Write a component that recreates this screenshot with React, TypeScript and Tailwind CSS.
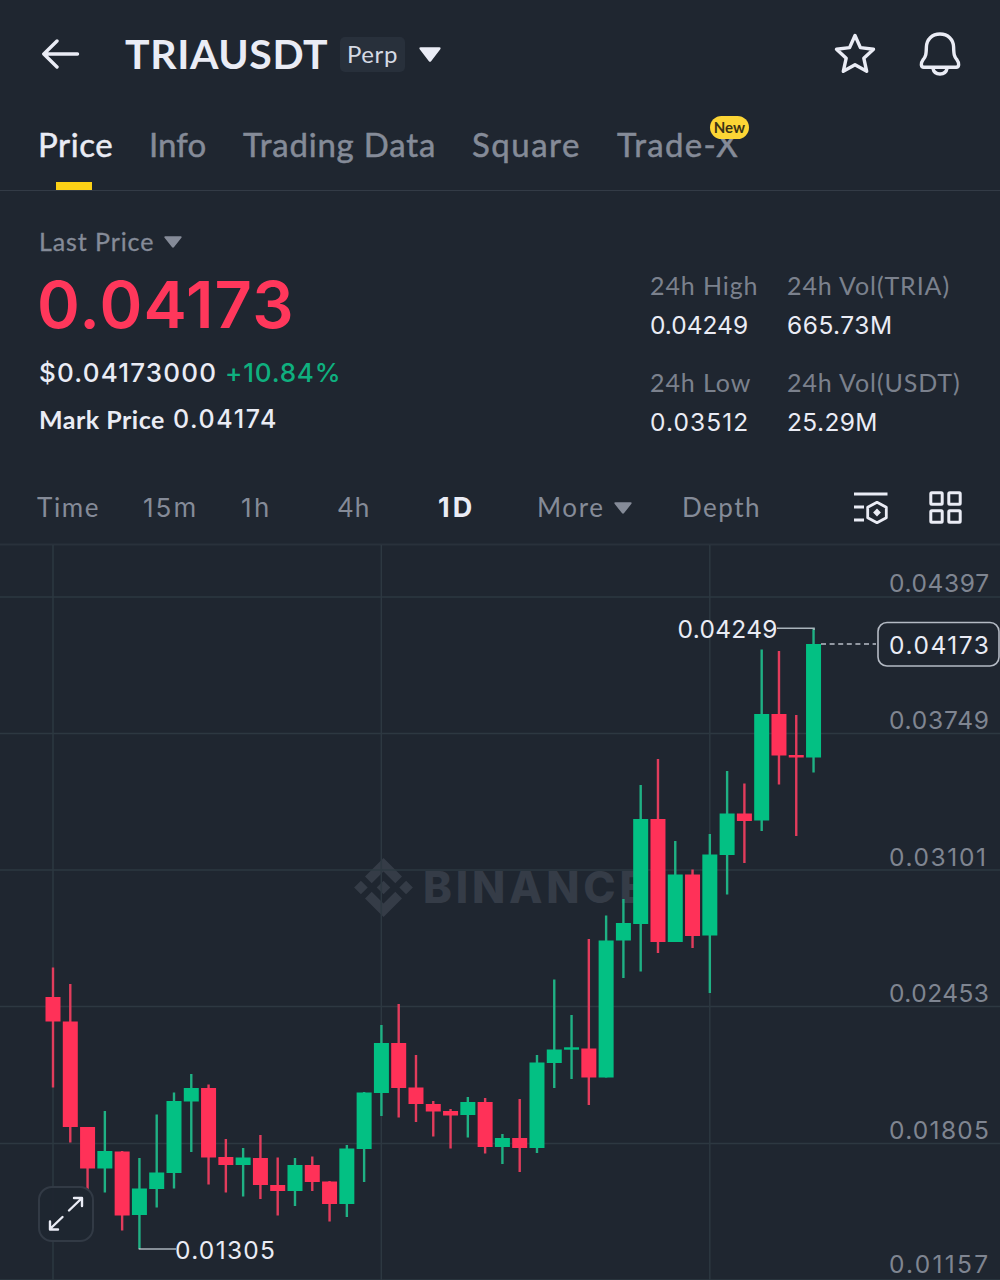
import { useState } from 'react';

type Candle = {
  up: boolean;
  high: number;
  top: number;
  bottom: number;
  low: number;
};

const TABS = [
  { id: 'price', title: 'Price', box: 'w-[111px]', text: 'tracking-[0.6px]' },
  { id: 'info', title: 'Info', box: 'w-[94px]', text: 'tracking-[0.1px]' },
  { id: 'data', title: 'Trading Data', box: 'w-[229px]', text: 'tracking-[0.8px]' },
  { id: 'square', title: 'Square', box: 'w-[145px]', text: 'tracking-[1.5px]' },
  { id: 'tradex', title: 'Trade-X', box: 'w-[122px]', text: 'tracking-[1.3px]' },
];

const STATS = [
  { label: '24h High', value: '0.04249', text: 'tracking-[0px]' },
  { label: '24h Vol(TRIA)', value: '665.73M', text: 'tracking-[0.5px]' },
  { label: '24h Low', value: '0.03512', text: 'tracking-[1.1px]' },
  { label: '24h Vol(USDT)', value: '25.29M', text: 'tracking-[0.4px]' },
];

const GRID_Y = [597, 733.5, 870, 1006.5, 1143.5, 1280];
const GRID_X = [53, 381.3, 709.8];

const AXIS = [
  { y: 592, text: '0.04397', width: 100 },
  { y: 728.5, text: '0.03749', width: 100 },
  { y: 865.5, text: '0.03101', width: 97 },
  { y: 1002, text: '0.02453', width: 100 },
  { y: 1138.5, text: '0.01805', width: 100 },
  { y: 1273, text: '0.01157', width: 99 },
];

// [up, high, body top, body bottom, low]
const RAW: [number, number, number, number, number][] = [
  [0, 967.5, 997, 1021.5, 1087.5],
  [0, 984, 1021.5, 1127, 1142.5],
  [0, 1127, 1127, 1168.5, 1191],
  [1, 1111, 1151, 1168.5, 1192.5],
  [0, 1151, 1151.5, 1215.5, 1230.5],
  [1, 1158, 1188.5, 1215, 1249],
  [1, 1114.5, 1172.5, 1189, 1207.5],
  [1, 1092.5, 1101, 1173, 1188.5],
  [1, 1074, 1088, 1101.5, 1152],
  [0, 1084.5, 1088, 1157.5, 1184.5],
  [0, 1139, 1157, 1165, 1192.5],
  [1, 1148, 1157.5, 1165, 1196.5],
  [0, 1135, 1158, 1185, 1199],
  [0, 1157.5, 1185, 1191, 1215.5],
  [1, 1158, 1165, 1191, 1206],
  [0, 1156.5, 1165, 1182, 1191],
  [0, 1181, 1181.5, 1204, 1221.5],
  [1, 1145, 1148.5, 1204, 1217],
  [1, 1092, 1092.5, 1149, 1182],
  [1, 1025, 1043, 1093, 1116],
  [0, 1004, 1043, 1088, 1117.5],
  [0, 1055, 1087.5, 1104, 1122],
  [0, 1101, 1104, 1111.5, 1136.5],
  [0, 1109, 1111, 1115.5, 1148.5],
  [1, 1097, 1102, 1115, 1137.5],
  [0, 1098, 1102, 1147, 1153.5],
  [1, 1134, 1138, 1147, 1164],
  [0, 1099, 1138, 1148, 1172],
  [1, 1055, 1062.5, 1148, 1153],
  [1, 979.5, 1049.5, 1063, 1088],
  [1, 1015, 1047.3, 1049.7, 1079],
  [0, 939, 1048.5, 1077.5, 1105],
  [1, 915.5, 940.5, 1077.5, 1077.5],
  [1, 899, 923, 940.5, 978],
  [1, 785, 819, 924, 971.5],
  [0, 759, 819, 942, 953],
  [1, 841, 874.5, 942, 942],
  [0, 869.5, 874.5, 936, 948],
  [1, 834, 854.5, 935.5, 993],
  [1, 771, 813.5, 855, 894.5],
  [0, 783.5, 813.5, 821, 863],
  [1, 649.5, 714, 820.5, 831],
  [0, 651, 714, 755.5, 784.5],
  [0, 715, 755, 757.5, 836],
  [1, 628, 644, 757.5, 772.5],
];

const candles: Candle[] = RAW.map(([up, high, top, bottom, low]) => ({
  up: up === 1,
  high,
  top,
  bottom,
  low,
}));

function Caret({ className }: { className: string }) {
  return (
    <svg className={className} viewBox="0 0 22 15" preserveAspectRatio="none" fill="currentColor">
      <path d="M1.6 0.3h18.8c1.2 0 1.6 1 0.9 1.9l-9.2 12c-0.6 0.8-1.6 0.8-2.2 0l-9.2-12c-0.7-0.9-0.3-1.9 0.9-1.9z" />
    </svg>
  );
}

function Header() {
  return (
    <header className="flex h-[108px] items-center pl-[41px] pr-[39px]">
      <svg className="h-[30px] w-[39px]" viewBox="0 0 39 30" fill="none" stroke="currentColor" strokeWidth="3.4" strokeLinecap="round" strokeLinejoin="round">
        <path d="M36.5 15H3M16 2L2.8 15L16 28" />
      </svg>
      <h1 className="ml-[45px] w-[215px] whitespace-nowrap text-[41px] font-bold leading-[48px] tracking-[0.6px]">TRIAUSDT</h1>
      <span className="flex h-[35px] w-[65px] items-center justify-center rounded-[5px] bg-[#28303b] text-[24px] tracking-[0.6px] text-[#d5dae4]">
        Perp
      </span>
      <Caret className="ml-[14px] h-[15px] w-[22px]" />
      <svg className="ml-auto h-[42px] w-[42px]" viewBox="0 0 42 42" fill="none" stroke="currentColor" strokeWidth="3.4" strokeLinejoin="round">
        <path d="M21 2.5L26.4 14.6L39.5 16.2L29.8 25.2L32.7 38.3L21 31.8L9.3 38.3L12.2 25.2L2.5 16.2L15.6 14.6Z" />
      </svg>
      <svg className="ml-[43px] h-[44px] w-[42px]" viewBox="0 0 42 44" fill="none" stroke="currentColor" strokeWidth="3.4" strokeLinejoin="round">
        <path d="M21 2C13 2 7.6 7.6 7.4 15C7.2 22 7 24.5 3.8 28.2C1.6 31 1.8 35.3 4.8 35.3H37.2C40.2 35.3 40.4 31 38.2 28.2C35 24.5 34.8 22 34.6 15C34.4 7.6 29 2 21 2Z" />
        <path d="M13.8 35.8C14.6 39.8 17.4 42 21 42C24.6 42 27.4 39.8 28.2 35.8" />
      </svg>
    </header>
  );
}

function Tabs() {
  const [active, setActive] = useState('price');

  return (
    <nav className="flex h-[83px] border-b border-[#333b46] pl-[38px]">
      {TABS.map((tab) => (
        <div key={tab.id} className={tab.box}>
          <button
            onClick={() => setActive(tab.id)}
            className={`relative flex flex-col items-center whitespace-nowrap [-webkit-text-stroke:0.5px_currentColor] ${active === tab.id ? 'text-[#eaecf5]' : 'text-[#858b98]'}`}
          >
            <span className={`h-[74px] text-[33px] leading-[72px] ${tab.text}`}>{tab.title}</span>
            {active === tab.id && <span className="mr-[3px] h-[8px] w-[36px] bg-[#fcd116]" />}
            {tab.id === 'tradex' && (
              <span className="absolute right-[-10px] top-[8px] h-[23px] w-[39px] rounded-full bg-[#fcd535] text-center text-[15px] font-bold leading-[23px] text-[#3a3216] [-webkit-text-stroke:0px]">
                New
              </span>
            )}
          </button>
        </div>
      ))}
    </nav>
  );
}

function Summary() {
  return (
    <section className="flex h-[279px] justify-between pl-[39px]">
      <div className="pt-[34px]">
        <div className="flex h-[34px] items-center text-[25px] tracking-[0.9px] text-[#858b98] [-webkit-text-stroke:0.3px_currentColor]">
          Last Price
          <Caret className="ml-[10px] h-[12px] w-[18px]" />
        </div>
        <div className="-ml-[2px] h-[92px] font-[Inter,sans-serif] text-[65px] font-semibold leading-[92px] tracking-[1.2px] text-[#ff375b]">
          0.04173
        </div>
        <div className="flex h-[44px] items-center font-[Inter,sans-serif] text-[26px] font-medium leading-[42px]">
          <span className="w-[186px] tracking-[1.2px]">$0.04173000</span>
          <span className="tracking-[0.8px] text-[#0fb07f]">+10.84%</span>
        </div>
        <div className="flex h-[50px] items-center text-[25px] font-bold">
          <span className="w-[134px] tracking-[0.5px]">Mark Price</span>
          <span className="font-[Inter,sans-serif] font-medium tracking-[1.6px]">0.04174</span>
        </div>
      </div>
      <div className="grid w-[350px] grid-cols-[137px_1fr] content-start gap-y-[19px] pt-[76px]">
        {STATS.map((stat) => (
          <div key={stat.label} className="whitespace-nowrap">
            <div className="h-[39px] text-[25px] leading-[37px] tracking-[0.9px] text-[#7b818d]">{stat.label}</div>
            <div className={`h-[39px] font-[Inter,sans-serif] text-[24.5px] leading-[38px] ${stat.text}`}>{stat.value}</div>
          </div>
        ))}
      </div>
    </section>
  );
}

function Intervals() {
  return (
    <div className="flex h-[73px] items-center pl-[37px] pt-[2px] text-[26px] leading-[71px] text-[#858b98]">
      <span className="w-[106px] tracking-[1.6px]">Time</span>
      <span className="w-[98px] font-[Inter,sans-serif] tracking-[2px]">15m</span>
      <span className="w-[97px] font-[Inter,sans-serif] tracking-[2.5px]">1h</span>
      <span className="w-[100px] tracking-[1.6px]">4h</span>
      <span className="w-[99px] font-[Inter,sans-serif] text-[27px] font-bold tracking-[3px] text-[#eaecf5]">1D</span>
      <span className="flex w-[145px] items-center tracking-[1.6px]">
        More
        <Caret className="ml-[9px] h-[12px] w-[18px]" />
      </span>
      <span className="tracking-[1.5px]">Depth</span>
      <svg className="ml-auto h-[34px] w-[36px] text-[#eaecf5]" viewBox="0 0 36 34" fill="none" stroke="currentColor" strokeWidth="2.8">
        <path d="M1 3H34.5M1 16H11M1 29H11" />
        <path d="M24 11.3L33.3 16.3V26.7L24 31.7L14.7 26.7V16.3Z" strokeLinejoin="round" />
        <path d="M24 17.6L27.9 21.5L24 25.4L20.1 21.5Z" fill="currentColor" stroke="none" />
      </svg>
      <svg className="ml-[40px] mr-[38px] h-[33px] w-[33px] text-[#eaecf5]" viewBox="0 0 33 33" fill="none" stroke="currentColor" strokeWidth="3">
        <rect x="1.8" y="1.8" width="11.4" height="11.4" rx="1" />
        <rect x="19.8" y="1.8" width="11.4" height="11.4" rx="1" />
        <rect x="1.8" y="19.8" width="11.4" height="11.4" rx="1" />
        <rect x="19.8" y="19.8" width="11.4" height="11.4" rx="1" />
      </svg>
    </div>
  );
}

function Chart() {
  return (
    <div className="relative">
      <svg className="block h-[737px] w-[1000px]" viewBox="0 543 1000 737">
        {/* watermark */}
        <g fill="#353c47">
          <g transform="translate(383.5 887.5)">
            <path d="M0 -29.5L18.5 -11L11.8 -4.3L0 -16L-11.8 -4.3L-18.5 -11Z" />
            <path d="M0 29.5L18.5 11L11.8 4.3L0 16L-11.8 4.3L-18.5 11Z" />
            <path d="M0 -6.8L6.8 0L0 6.8L-6.8 0Z" />
            <path d="M-22.6 -6.8L-15.8 0L-22.6 6.8L-29.4 0Z" />
            <path d="M22.6 -6.8L29.4 0L22.6 6.8L15.8 0Z" />
          </g>
          <text x="423" y="903" textLength="223" className="font-[Inter,sans-serif] text-[43.5px] font-extrabold">BINANCE</text>
        </g>

        {/* grid */}
        <rect x="0" y="543.5" width="1000" height="2" fill="#29313b" />
        {GRID_Y.map((y) => (
          <line key={y} x1="0" x2="1000" y1={y} y2={y} stroke="#2d3841" strokeWidth="1.5" />
        ))}
        {GRID_X.map((x) => (
          <line key={x} x1={x} x2={x} y1="545" y2="1280" stroke="#2d3841" strokeWidth="1.5" />
        ))}

        {/* candles */}
        {candles.map((c, i) => {
          const x = 53 + i * 17.285;
          return (
            <g key={i} fill={c.up ? '#03c083' : '#ff3158'}>
              <rect x={x - 1.2} y={c.high} width="2.4" height={c.low - c.high} fill={c.up ? '#1fb184' : '#e23c5c'} />
              <rect x={x - 7.5} y={c.top} width="15" height={c.bottom - c.top} />
            </g>
          );
        })}

        {/* high / low markers */}
        <path d="M777 628.3H814V630" fill="none" stroke="#a9b3bb" strokeWidth="1.6" />
        <path d="M139.5 1248V1249H176" fill="none" stroke="#a9b3bb" strokeWidth="1.6" />
        <path d="M821 644H876" stroke="#b9bfc8" strokeWidth="1.5" strokeDasharray="5 3.6" />
        <g className="font-[Inter,sans-serif] text-[24.5px]" fill="#eaecf5">
          <text x="677.5" y="637.5" textLength="100">0.04249</text>
          <text x="175" y="1258.5" textLength="100">0.01305</text>
          <rect x="878" y="622.5" width="121" height="43.5" rx="9" fill="#1f2630" stroke="#b4bac4" strokeWidth="1.6" />
          <text x="889" y="653.5" textLength="100">0.04173</text>
        </g>

        <g className="font-[Inter,sans-serif] text-[24.5px]" fill="#7f8591">
          {AXIS.map((a) => (
            <text key={a.text} x="889" y={a.y} textLength={a.width}>{a.text}</text>
          ))}
        </g>
      </svg>

      <button className="absolute bottom-[38px] left-[38px] h-[56px] w-[56px] rounded-[14px] border-2 border-[#323a45] bg-[#1f2630]/95">
        <svg className="h-[52px] w-[52px]" viewBox="0 0 52 52" fill="none" stroke="#eaecf5" strokeWidth="2.4" strokeLinecap="round" strokeLinejoin="round">
          <path d="M29 22.5L41.5 10.5M34 10H42V18" />
          <path d="M22.5 29L10.5 40.5M10 33.5V41.5H18" />
        </svg>
      </button>
    </div>
  );
}

export default function App() {
  return (
    <div className="h-[1280px] w-[1000px] overflow-hidden bg-[#1f2630] font-[Lato,sans-serif] text-[#eaecf5]">
      <Header />
      <Tabs />
      <Summary />
      <Intervals />
      <Chart />
    </div>
  );
}
